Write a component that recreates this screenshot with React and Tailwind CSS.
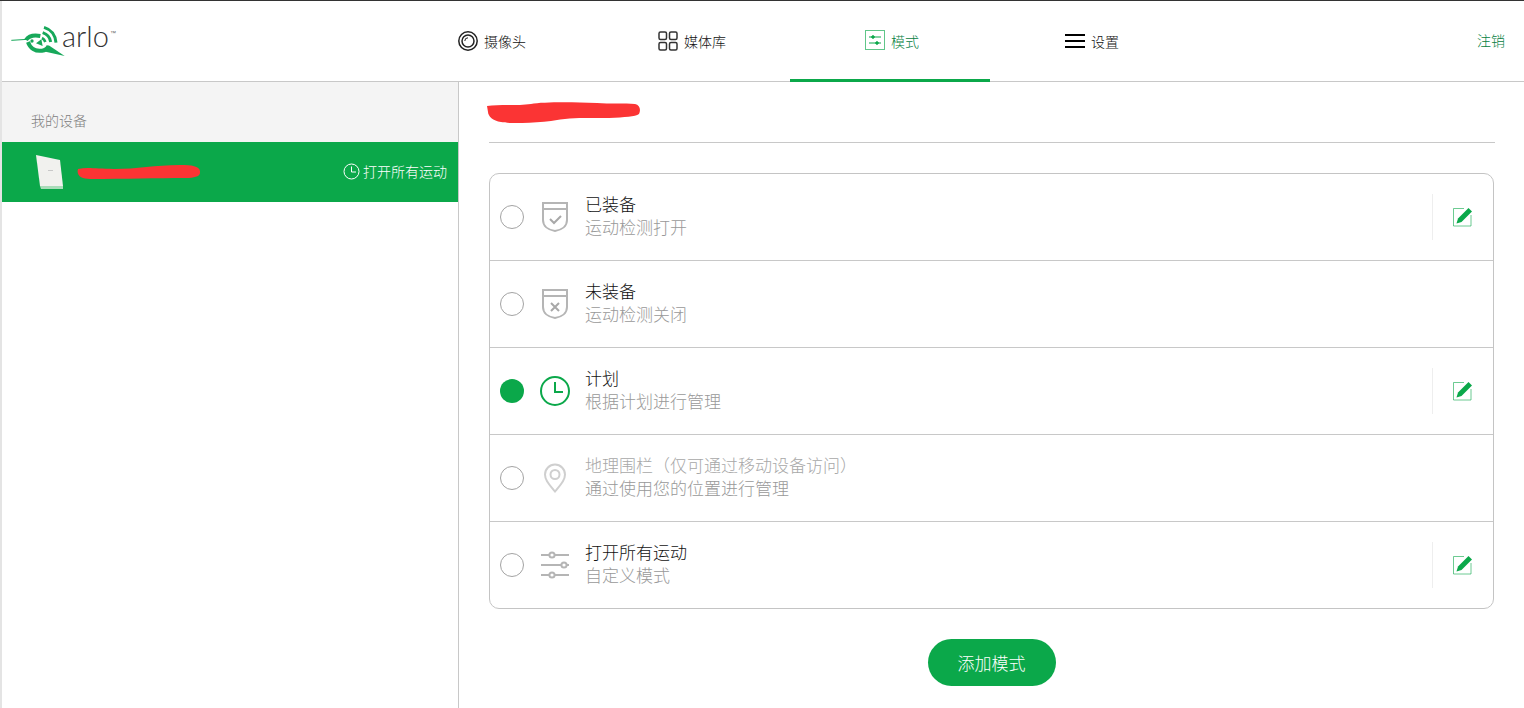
import React from "react";

const GREEN = "#0ba84a";

const TABS = [
  { label: "摄像头", icon: CameraIcon },
  { label: "媒体库", icon: GridIcon },
  { label: "模式", icon: ModeIcon, active: true },
  { label: "设置", icon: MenuIcon },
];

const MODES = [
  { title: "已装备", sub: "运动检测打开", icon: ArmedIcon, edit: true },
  { title: "未装备", sub: "运动检测关闭", icon: DisarmedIcon },
  { title: "计划", sub: "根据计划进行管理", icon: ClockIcon, selected: true, edit: true },
  { title: "地理围栏（仅可通过移动设备访问）", sub: "通过使用您的位置进行管理", icon: PinIcon, disabled: true },
  { title: "打开所有运动", sub: "自定义模式", icon: SlidersIcon, edit: true },
];

function CameraIcon() {
  return (
    <svg width="20" height="20" viewBox="0 0 20 20" fill="none" stroke="#222">
      <circle cx="10" cy="10" r="9.2" strokeWidth="1.5" />
      <circle cx="10" cy="10" r="6" strokeWidth="1.5" />
      <path d="M6.8 10a3.2 3.2 0 0 1 3.2-3.2" strokeWidth="1" />
    </svg>
  );
}

function GridIcon() {
  return (
    <svg width="20" height="20" viewBox="0 0 20 20" fill="none" stroke="#333" strokeWidth="1.5">
      <rect x="1" y="1" width="7.5" height="7.5" rx="1.5" />
      <rect x="11.5" y="1" width="7.5" height="7.5" rx="1.5" />
      <rect x="1" y="11.5" width="7.5" height="7.5" rx="1.5" />
      <rect x="11.5" y="11.5" width="7.5" height="7.5" rx="1.5" />
    </svg>
  );
}

function ModeIcon() {
  return (
    <svg width="20" height="20" viewBox="0 0 20 20" fill="none" stroke={GREEN}>
      <rect x="0.5" y="0.5" width="19" height="19" strokeOpacity="0.65" />
      <path d="M4 7h12M4 13h12" strokeWidth="1.2" />
      <circle cx="8" cy="7" r="1.3" fill={GREEN} />
      <circle cx="12" cy="13" r="1.3" fill={GREEN} />
    </svg>
  );
}

function MenuIcon() {
  return (
    <svg width="20" height="14" viewBox="0 0 20 14" fill="#000">
      <rect y="0" width="20" height="2" />
      <rect y="6" width="20" height="2" />
      <rect y="12" width="20" height="2" />
    </svg>
  );
}

function ArmedIcon() {
  return (
    <svg width="30" height="32" viewBox="0 0 30 32" fill="none" stroke="#b5b5b5" strokeWidth="2">
      <path d="M3 2h24v17c0 6-5 10-12 11C8 29 3 25 3 19z" />
      <path d="M3 8h24" />
      <path d="M10 18l4 4 7-7" stroke="#a8a8a8" />
    </svg>
  );
}

function DisarmedIcon() {
  return (
    <svg width="30" height="32" viewBox="0 0 30 32" fill="none" stroke="#b5b5b5" strokeWidth="2">
      <path d="M3 2h24v17c0 6-5 10-12 11C8 29 3 25 3 19z" />
      <path d="M3 8h24" />
      <path d="M11 15l8 8M19 15l-8 8" stroke="#a8a8a8" />
    </svg>
  );
}

function ClockIcon() {
  return (
    <svg width="30" height="30" viewBox="0 0 30 30" fill="none" stroke={GREEN} strokeWidth="2">
      <circle cx="15" cy="15" r="14" />
      <path d="M15 6v10h8" />
    </svg>
  );
}

function PinIcon() {
  return (
    <svg width="24" height="30" viewBox="0 0 24 30" fill="none" stroke="#cfcfcf" strokeWidth="2">
      <path d="M12 28.5C6 21 2 17 2 11.5a10 10 0 0 1 20 0C22 17 18 21 12 28.5z" />
      <circle cx="12" cy="11.5" r="4.5" />
    </svg>
  );
}

function SlidersIcon() {
  return (
    <svg width="30" height="28" viewBox="0 0 30 28" fill="none" stroke="#b5b5b5" strokeWidth="2">
      <path d="M1 4h8M15 4h14M1 14h20M27 14h2M1 24h8M15 24h14" />
      <circle cx="12" cy="4" r="2.6" />
      <circle cx="24" cy="14" r="2.6" />
      <circle cx="12" cy="24" r="2.6" />
    </svg>
  );
}

function EditIcon() {
  return (
    <svg width="20" height="20" viewBox="0 0 20 20" fill="none">
      <path d="M11 1.500H0.500V19H18V8" stroke={GREEN} strokeOpacity="0.6" />
      <path d="M3.500 16.500L5 11.500 15.500 1 19 4.500 8.500 15z" fill={GREEN} />
    </svg>
  );
}

function Logo() {
  return (
    <div className="flex items-start">
      <svg width="57" height="37" viewBox="0 0 171 111" fill="none">
        <path d="M10 55L58 52" stroke="#17a85a" strokeWidth="3" />
        <path d="M54 54C62 42 76 38 97 42" stroke="#17a85a" strokeWidth="12" />
        <path d="M60 60C66 78 82 89 102 86C112 85 118 80 122 72" stroke="#17a85a" strokeWidth="12" />
        <path d="M106 88L122 70L170 102z" fill="#17a85a" />
        <circle cx="72" cy="57" r="5" fill="#17a85a" />
        <path d="M84 64L100 52L104 72z" fill="#17a85a" />
        <path d="M108 16C128 22 142 38 144 62" stroke="#17a85a" strokeWidth="9" />
        <path d="M104 32C116 36 126 46 128 60" stroke="#17a85a" strokeWidth="9" />
        <path d="M102 48C106 50 110 54 112 60" stroke="#17a85a" strokeWidth="8" />
      </svg>
      <span className="ml-[-3px] mt-[2px] font-['Lato',sans-serif] text-[29px] leading-[24px] font-light text-[#333]">
        arlo
      </span>
      <span className="ml-[1px] mt-[8px] font-['Liberation_Sans',sans-serif] text-[6px] leading-none text-[#666]">™</span>
    </div>
  );
}

function Redaction({ width, height, d }) {
  return (
    <svg width={width} height={height} viewBox={`0 0 ${width} ${height}`} fill="#fb3434">
      <path d={d} />
    </svg>
  );
}

function ModeRow({ title, sub, icon: Icon, selected, disabled, edit }) {
  return (
    <div className="flex h-[87px] items-center border-b border-[#c8c8c8] last:h-[86px] last:border-b-0">
      {selected ? (
        <div className="ml-[10px] h-6 w-6 rounded-full bg-[#0ba84a]" />
      ) : (
        <div className="ml-[10px] h-6 w-6 rounded-full border border-[#a3a3a3]" />
      )}
      <div className="ml-[16px] flex w-[30px] justify-center">
        <Icon />
      </div>
      <div className="mb-[4px] ml-[15px] flex-1 text-[17px] leading-[23px]">
        <div className={disabled ? "text-[#a8a8a8]" : "text-[#111]"}>{title}</div>
        <div className="text-[#999]">{sub}</div>
      </div>
      {edit && (
        <div className="flex h-[46px] w-[61px] items-center justify-center border-l border-[#eeeeee] pb-[1px]">
          <EditIcon />
        </div>
      )}
    </div>
  );
}

export default function App() {
  return (
    <div className="flex h-[708px] flex-col overflow-hidden border-t border-[#333] bg-white pl-[2px] font-['Noto_Sans_CJK_SC',sans-serif] font-light shadow-[inset_2px_0_0_#e4e4e4]">
      <header className="flex h-[81px] shrink-0 items-stretch border-b border-[#c8c8c8]">
        <div className="w-[388px] pl-[6px] pt-[21px]">
          <Logo />
        </div>
        {TABS.map(({ label, icon: Icon, active }) => (
          <div
            key={label}
            className={`mb-[-1px] flex w-[200px] items-center justify-center gap-[6px] pb-[1px] pl-1 text-sm ${
              active ? "border-b-[3px] border-[#0ba84a] text-[#06803f]" : "text-[#111]"
            }`}
          >
            <Icon />
            <span className={active ? "mt-[2px]" : ""}>{label}</span>
          </div>
        ))}
        <div className="flex flex-1 items-start justify-end pr-[19px] pt-[29px] text-sm leading-5 text-[#06803f]">注销</div>
      </header>

      <div className="flex flex-1">
        <aside className="w-[457px] shrink-0 border-r border-[#c8c8c8]">
          <div className="h-[60px] bg-[#f4f4f4] pl-[29px] pt-[28px] text-sm leading-5 text-[#808080]">我的设备</div>
          <div className="flex h-[60px] items-center justify-between bg-[#0ba84a] pr-[11px] text-sm text-white">
            <div className="flex items-center">
              <svg width="32" height="36" viewBox="0 0 32 36" className="ml-[32px]">
                <path d="M2 1l24 5 3 26H6z" fill="#f1f1ee" />
                <path d="M6 32h23v3H7z" fill="#a9dcb9" />
                <rect x="14" y="16" width="5" height="1" fill="#c8c8c8" />
              </svg>
              <div className="ml-[10px]">
                <Redaction
                  width={124}
                  height={16}
                  d="M2 5c10-2 18 0 36 0 24 0 40-4 66-4 12 0 19 1 20 6s-4 7-14 7c-30 0-60 1-96 1C6 15 0 12 2 5z"
                />
              </div>
            </div>
            <div className="flex items-center gap-[3px] pb-[2px]">
              <svg width="17" height="17" viewBox="0 0 17 17" fill="none" stroke="#fff" className="ml-[-1px]">
                <circle cx="8.500" cy="8.500" r="7.500" />
                <path d="M8.500 3.500v5.500h4.500" />
              </svg>
              <span>打开所有运动</span>
            </div>
          </div>
        </aside>

        <main className="flex-1 pl-[30px] pr-[29px]">
          <div className="h-[61px] border-b border-[#c8c8c8] pt-[20px]">
            <div className="ml-[-2px]">
              <Redaction
                width={154}
                height={21}
                d="M0 4c12-2 30 0 44-2 12-2 38-2 66-1 12 1 28 0 38 1 5 1 6 6 4 10-4 3-14 3-30 4-20 0-40-1-58 3-18 2-42 3-50 1C6 19 1 14 1 10z"
              />
            </div>
          </div>
          <div className="mr-[1px] mt-[30px] rounded-[10px] border border-[#c4c4c4]">
            {MODES.map((mode) => (
              <ModeRow key={mode.title} {...mode} />
            ))}
          </div>
          <div className="mt-[30px] flex justify-center pr-[1px]">
            <button className="h-[47px] w-[128px] rounded-full bg-[#0ba84a] text-[17px] text-white">添加模式</button>
          </div>
        </main>
      </div>
    </div>
  );
}
